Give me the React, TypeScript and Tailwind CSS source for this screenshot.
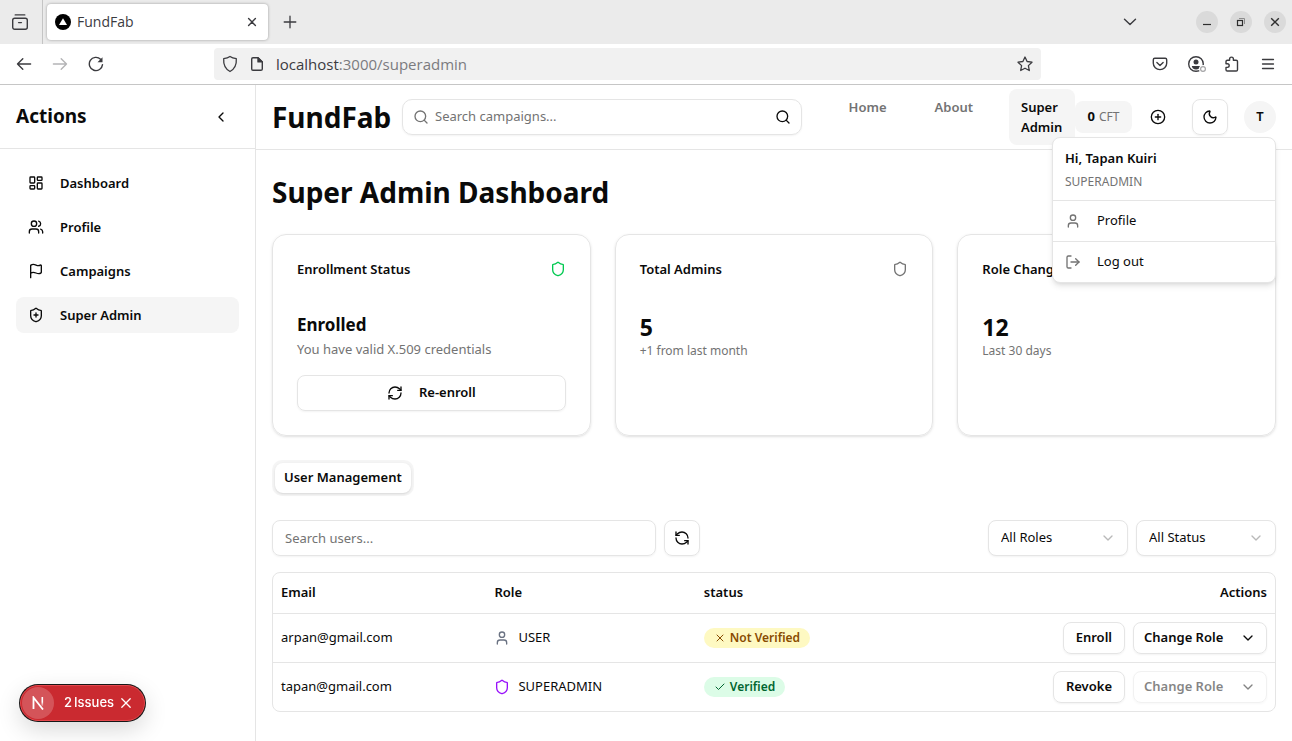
import type { ReactNode } from "react";
import {
  Check,
  ChevronDown,
  ChevronLeft,
  CirclePlus,
  Flag,
  LayoutDashboard,
  LogOut,
  Moon,
  RefreshCcw,
  RefreshCw,
  Search,
  Shield,
  ShieldPlus,
  User,
  Users,
  X,
} from "lucide-react";

function TabStrip() {
  return (
    <div className="flex h-11 items-center bg-[#ebebeb] text-[#3b3b3f]">
      <button aria-label="Recent browsing" className="flex h-11 w-[43px] shrink-0 items-center justify-center border-r border-[#c4c4c4] pr-0.5">
        <svg width="18" height="18" viewBox="0 0 18 18" fill="none" stroke="currentColor" strokeWidth="1.4" strokeLinecap="round">
          <path d="M4.2 1.900h9.600" />
          <rect x="1.700" y="5.300" width="14.600" height="11" rx="2" />
          <path d="M7.600 9.600h2.800" />
        </svg>
      </button>
      <div className="ml-1 flex h-9 w-[221px] items-center rounded bg-white pr-1.5 pl-2 shadow-[0_0_3px_rgba(0,0,0,0.35)]">
        <svg width="16" height="16" viewBox="0 0 16 16" className="shrink-0">
          <circle cx="8" cy="8" r="8" fill="#000" />
          <path d="M8 4.2l4 6.8H4z" fill="#fff" />
        </svg>
        <span className="ml-1.5 flex-1 text-sm">FundFab</span>
        <button aria-label="Close tab" className="flex size-5 items-center justify-center">
          <svg width="10" height="10" viewBox="0 0 10 10" stroke="currentColor" strokeWidth="1.4" strokeLinecap="round">
            <path d="M1.6 1.6l6.8 6.8M8.4 1.6L1.6 8.4" />
          </svg>
        </button>
      </div>
      <button aria-label="New tab" className="ml-3 flex size-5 items-center justify-center">
        <svg width="14" height="14" viewBox="0 0 14 14" stroke="currentColor" strokeWidth="1.3" strokeLinecap="round">
          <path d="M7 1.2v11.6M1.2 7h11.6" />
        </svg>
      </button>
      <div className="flex-1" />
      <button aria-label="List all tabs" className="mr-14 flex size-5 items-center justify-center">
        <svg width="14" height="14" viewBox="0 0 14 14" fill="none" stroke="currentColor" strokeWidth="1.4" strokeLinecap="round" strokeLinejoin="round">
          <path d="M1.5 4.2L7 9.6l5.500-5.400" />
        </svg>
      </button>
      <div className="mr-1.5 flex gap-3">
        <button aria-label="Minimize" className="flex size-[22px] items-center justify-center rounded-full bg-[#dadada]">
          <svg width="10" height="10" viewBox="0 0 10 10" stroke="#2e2e2e" strokeWidth="1.2">
            <path d="M1 7.500h8" />
          </svg>
        </button>
        <button aria-label="Restore" className="flex size-[22px] items-center justify-center rounded-full bg-[#dadada]">
          <svg width="10" height="10" viewBox="0 0 10 10" fill="none">
            <path d="M3 1.500h5.500V7" stroke="#8c8c8c" />
            <rect x="1.500" y="3.500" width="5" height="5" stroke="#2e2e2e" strokeWidth="1.2" />
          </svg>
        </button>
        <button aria-label="Close" className="flex size-[22px] items-center justify-center rounded-full bg-[#dadada]">
          <svg width="10" height="10" viewBox="0 0 10 10" stroke="#2e2e2e" strokeWidth="1.4">
            <path d="M1.200 1.200l7.600 7.600M8.800 1.200L1.200 8.800" />
          </svg>
        </button>
      </div>
    </div>
  );
}

function AddressBar() {
  return (
    <div className="flex h-[41px] items-center border-b border-[#c6c6c6] bg-white text-[#3b3b3f]">
      <div className="flex w-[214px] shrink-0 items-center gap-5 pl-4">
        <button aria-label="Back">
          <svg width="16" height="16" viewBox="0 0 16 16" fill="none" stroke="currentColor" strokeWidth="1.4" strokeLinecap="round" strokeLinejoin="round">
            <path d="M14.600 8H1.500M6.800 2.700L1.500 8l5.300 5.300" />
          </svg>
        </button>
        <button aria-label="Forward" disabled className="text-[#b4b4b6]">
          <svg width="16" height="16" viewBox="0 0 16 16" fill="none" stroke="currentColor" strokeWidth="1.400" strokeLinecap="round" strokeLinejoin="round">
            <path d="M1.400 8h13.100M9.200 2.700L14.500 8l-5.300 5.300" />
          </svg>
        </button>
        <button aria-label="Reload">
          <svg width="16" height="16" viewBox="0 0 16 16" fill="none" stroke="currentColor" strokeWidth="1.400" strokeLinecap="round">
            <path d="M14.500 8.600A6.600 6.600 0 1 1 12.600 3.300" />
            <path d="M14.500 1.200v5H9.500z" fill="currentColor" stroke="none" />
          </svg>
        </button>
      </div>
      <div className="flex h-8 flex-1 items-center rounded bg-[#f1f1f1] px-2">
        <svg width="16" height="18" viewBox="0 0 16 18" fill="none" stroke="currentColor" strokeWidth="1.300" strokeLinejoin="round">
          <path d="M8 1.500c1.700 1.200 3.600 1.800 6.300 2.100.4 5.400-1.300 10.200-6.300 12.900C3 13.800 1.300 9 1.700 3.600 4.400 3.300 6.300 2.700 8 1.500z" />
        </svg>
        <svg width="14" height="16" viewBox="0 0 14 16" fill="none" stroke="currentColor" strokeWidth="1.400" strokeLinejoin="round" className="ml-3">
          <path d="M3 1.700h5l4.300 4.200v7q0 1.400-1.400 1.400H3q-1.300 0-1.300-1.400V3Q1.700 1.700 3 1.700z" />
          <path d="M8 1.700v4.200h4.300z" fill="currentColor" />
        </svg>
        <div role="textbox" aria-label="Address" className="ml-3 flex-1 text-[15px] text-[#7b7b7f]">
          <span className="text-[#3b3b3f]">localhost</span>:3000/superadmin
        </div>
        <button aria-label="Bookmark this page">
          <svg width="16" height="16" viewBox="0 0 16 16" fill="none" stroke="currentColor" strokeWidth="1.300" strokeLinejoin="round">
            <path d="M8 1l2.100 4.500 4.900.7-3.600 3.400.9 4.900L8 12.200l-4.300 2.300.9-4.900L1 6.200l4.900-.7z" />
          </svg>
        </button>
      </div>
      <div className="flex w-[251px] shrink-0 items-center justify-end gap-5 pr-4">
        <button aria-label="Save to Pocket">
          <svg width="16" height="16" viewBox="0 0 16 16" fill="none" stroke="currentColor" strokeWidth="1.400" strokeLinecap="round" strokeLinejoin="round">
            <path d="M2.800 2.200h10.400q1.500 0 1.500 1.500v3.600a6.700 6.300 0 0 1-13.400 0V3.700q0-1.500 1.500-1.500z" />
            <path d="M4.900 6.600L8 9.500l3.100-2.900" />
          </svg>
        </button>
        <button aria-label="Account">
          <svg width="16" height="16" viewBox="0 0 16 16" fill="none" className="overflow-visible">
            <circle cx="8" cy="8" r="7.300" stroke="currentColor" strokeWidth="1.400" />
            <circle cx="8" cy="6" r="2.500" fill="currentColor" />
            <path d="M3.800 10h8.400c0 2-1.900 3.400-4.200 3.400S3.800 12 3.800 10z" fill="currentColor" />
            <circle cx="15" cy="13" r="4" fill="#fff" />
            <circle cx="15" cy="13" r="2.400" fill="#fff" stroke="#a4a4a6" strokeWidth="1.200" />
          </svg>
        </button>
        <button aria-label="Extensions">
          <svg width="16" height="16" viewBox="0 0 16 16" fill="none" stroke="currentColor" strokeWidth="1.400" strokeLinejoin="round">
            <path d="M2 5.500q0-1.300 1.300-1.300h2.300V3a1.900 1.900 0 0 1 3.800 0v1.200h2.800q1.300 0 1.300 1.300v8.200q0 1.300-1.300 1.300H3.300Q2 15 2 13.700v-2.300h1.400a1.800 1.800 0 0 0 0-3.600H2z" />
          </svg>
        </button>
        <button aria-label="Open application menu">
          <svg width="16" height="16" viewBox="0 0 16 16" stroke="currentColor" strokeWidth="1.300" strokeLinecap="round">
            <path d="M2.500 3.500h11M2.500 8h11M2.500 12.500h11" />
          </svg>
        </button>
      </div>
    </div>
  );
}

const sideItems = [
  { label: "Dashboard", icon: LayoutDashboard, active: false },
  { label: "Profile", icon: Users, active: false },
  { label: "Campaigns", icon: Flag, active: false },
  { label: "Super Admin", icon: ShieldPlus, active: true },
];

function Sidebar() {
  return (
    <aside className="w-64 shrink-0 border-r border-neutral-200">
      <div className="flex h-16 items-center justify-between border-b border-neutral-200 px-4">
        <h2 className="text-[19px] font-bold">Actions</h2>
        <button aria-label="Collapse sidebar" className="flex size-9 items-center justify-center">
          <ChevronLeft size={16} />
        </button>
      </div>
      <nav className="flex flex-col gap-2 p-4">
        {sideItems.map(({ label, icon: Icon, active }) => (
          <a
            key={label}
            href="#"
            className={`flex items-center gap-4 rounded-lg px-3 py-2 text-[13px] leading-5 font-semibold ${active ? "bg-neutral-100" : ""}`}
          >
            <Icon size={16} />
            {label}
          </a>
        ))}
      </nav>
    </aside>
  );
}

function AccountMenu() {
  return (
    <div className="absolute top-9 right-0 z-10 w-56 rounded-lg border border-neutral-200 bg-white shadow-md">
      <div className="flex flex-col gap-1 px-3 pt-2.5 pb-2">
        <p className="text-[13px] leading-5 font-semibold">Hi, Tapan Kuiri</p>
        <p className="text-xs leading-5 text-neutral-500">SUPERADMIN</p>
      </div>
      <a href="#" className="flex h-[41px] items-center gap-4 border-t border-neutral-200 px-3 text-[13px]">
        <User size={16} className="text-neutral-500" />
        Profile
      </a>
      <button className="flex h-[41px] w-full items-center gap-4 border-t border-neutral-200 px-3 text-[13px]">
        <LogOut size={16} className="text-neutral-500" />
        Log out
      </button>
    </div>
  );
}

function Header() {
  return (
    <header className="flex h-[65px] items-center border-b border-neutral-200 px-4">
      <a href="#" className="w-[130px] shrink-0 text-[28px] font-bold">FundFab</a>
      <form className="flex h-9 max-w-[400px] flex-1 items-center rounded-[10px] border border-neutral-200 px-2.5 shadow-xs">
        <Search size={16} className="text-neutral-500" />
        <input
          aria-label="Search campaigns"
          placeholder="Search campaigns..."
          className="min-w-0 flex-1 px-1.5 text-[13px] outline-none placeholder:text-neutral-500"
        />
        <button type="button" aria-label="Search">
          <Search size={16} />
        </button>
      </form>
      <nav className="ml-auto flex items-start gap-6 text-[13px] leading-5 font-semibold">
        <a href="#" className="px-3 py-2 text-neutral-500">Home</a>
        <a href="#" className="px-3 py-2 text-neutral-500">About</a>
        <a href="#" className="w-[66px] rounded-lg bg-neutral-100 px-3 py-2">Super Admin</a>
      </nav>
      <div className="flex h-8 w-[57px] items-center justify-center gap-1 rounded-lg bg-neutral-100 text-[13px] font-bold">
        0 <span className="text-xs font-normal text-neutral-500">CFT</span>
      </div>
      <button aria-label="Add funds" className="ml-2 flex size-9 items-center justify-center">
        <CirclePlus size={16} />
      </button>
      <button aria-label="Toggle theme" className="ml-4 flex size-9 items-center justify-center rounded-lg border border-neutral-200 shadow-xs">
        <Moon size={16} />
      </button>
      <div className="relative ml-4">
        <button aria-label="Account menu" className="flex size-8 items-center justify-center rounded-full bg-neutral-100 text-[13px] font-semibold">
          T
        </button>
        <AccountMenu />
      </div>
    </header>
  );
}

function Card({ title, icon, children }: { title: string; icon?: ReactNode; children: ReactNode }) {
  return (
    <section className="rounded-[14px] border border-neutral-200 p-6 shadow-sm">
      <div className="mb-8 flex h-5 items-center justify-between">
        <h3 className="text-[13px] leading-5 font-semibold">{title}</h3>
        {icon}
      </div>
      {children}
    </section>
  );
}

function Stat({ value, note }: { value: string; note: string }) {
  return (
    <>
      <p className="text-[23px] leading-8 font-bold">{value}</p>
      <p className="text-xs leading-4 text-neutral-500">{note}</p>
    </>
  );
}

function Filter({ label, option }: { label: string; option: string }) {
  return (
    <div className="relative w-[140px]">
      <select aria-label={label} className="h-9 w-full appearance-none rounded-lg border border-neutral-200 bg-white px-3 text-[13px] shadow-xs">
        <option>{option}</option>
      </select>
      <ChevronDown size={16} className="pointer-events-none absolute top-2.5 right-3 text-[#b9b9b9]" />
    </div>
  );
}

const users = [
  { email: "arpan@gmail.com", role: "USER", verified: false, action: "Enroll" },
  { email: "tapan@gmail.com", role: "SUPERADMIN", verified: true, action: "Revoke" },
];

function UserTable() {
  return (
    <div className="mt-4 rounded-lg border border-neutral-200">
      <table className="w-full table-fixed text-left text-[13px]">
        <thead>
          <tr className="h-10 border-b border-neutral-200">
            <th className="w-[21.3%] px-2 font-semibold">Email</th>
            <th className="w-[20.9%] px-2 font-semibold">Role</th>
            <th className="w-[25%] px-2 font-semibold">status</th>
            <th className="px-2 text-right font-semibold">Actions</th>
          </tr>
        </thead>
        <tbody>
          {users.map((user) => (
            <tr key={user.email} className="h-[49px] border-b border-neutral-200 last:border-b-0">
              <td className="px-2">{user.email}</td>
              <td className="px-2">
                <div className="flex items-center gap-2">
                  {user.verified ? (
                    <Shield size={16} className="text-[#9810fa]" />
                  ) : (
                    <User size={16} className="text-[#6a7282]" />
                  )}
                  {user.role}
                </div>
              </td>
              <td className="px-2">
                <span
                  className={`flex h-5 w-fit items-center gap-1 rounded-full px-2.5 text-xs font-semibold ${
                    user.verified ? "bg-[#dcfce7] text-[#016630]" : "bg-[#fef9c2] text-[#894b00]"
                  }`}
                >
                  {user.verified ? <Check size={12} /> : <X size={12} />}
                  {user.verified ? "Verified" : "Not Verified"}
                </span>
              </td>
              <td className="px-2">
                <div className="flex justify-end gap-2 font-semibold">
                  <button className="h-8 rounded-lg border border-neutral-200 px-3 shadow-xs">{user.action}</button>
                  <button
                    disabled={user.verified}
                    className="flex h-8 w-[134px] items-center justify-between rounded-lg border border-neutral-200 px-2.5 shadow-xs disabled:opacity-50"
                  >
                    Change Role
                    <ChevronDown size={16} />
                  </button>
                </div>
              </td>
            </tr>
          ))}
        </tbody>
      </table>
    </div>
  );
}

function IssuesBadge() {
  return (
    <div className="fixed bottom-5 left-5 flex h-9 items-center rounded-full border border-[#e5484d] bg-[#ca2a30] pr-3 pl-px text-white shadow-[0_0_0_1px_#171717,0_8px_24px_rgba(0,0,0,0.16)]">
      <span className="flex size-8 items-center justify-center rounded-full bg-white/20">
        <svg width="14" height="14" viewBox="0 0 14 14" fill="none">
          <defs>
            <linearGradient id="stem" x1="11" y1="1" x2="11" y2="11" gradientUnits="userSpaceOnUse">
              <stop offset="0.500" stopColor="#fff" />
              <stop offset="1" stopColor="#fff" stopOpacity="0" />
            </linearGradient>
          </defs>
          <path d="M2.500 13V1.500L12 13.500" stroke="#fff" strokeWidth="1.800" />
          <path d="M11.300 1v9" stroke="url(#stem)" strokeWidth="1.600" />
        </svg>
      </span>
      <button className="ml-2.5 flex gap-0.5 font-[Inter,sans-serif] text-[13px] font-medium">
        <span>2</span>
        <span>Issues</span>
      </button>
      <button aria-label="Dismiss issues" className="ml-1.5">
        <svg width="12" height="12" viewBox="0 0 12 12" stroke="#fff" strokeWidth="1.300" strokeLinecap="round">
          <path d="M1.800 1.800l8.400 8.400M10.200 1.800l-8.400 8.400" />
        </svg>
      </button>
    </div>
  );
}

export default function App() {
  return (
    <div className="flex min-h-screen flex-col bg-white font-['Noto_Sans',sans-serif] text-neutral-950">
      <div className="font-['Open_Sans',sans-serif]">
        <TabStrip />
        <AddressBar />
      </div>
      <div className="flex flex-1">
        <Sidebar />
        <div className="min-w-0 flex-1">
          <Header />
          <main className="px-4 py-6">
            <h1 className="text-[28px] leading-9 font-bold">Super Admin Dashboard</h1>
            <div className="mt-6 grid grid-cols-3 gap-6">
              <Card title="Enrollment Status" icon={<Shield size={16} className="text-[#00c950]" />}>
                <p className="text-[17px] leading-7 font-bold">Enrolled</p>
                <p className="text-[13px] leading-5 text-neutral-500">You have valid X.509 credentials</p>
                <button className="mt-4 flex h-9 w-full items-center justify-center gap-4 rounded-lg border border-neutral-200 text-[13px] font-semibold shadow-xs">
                  <RefreshCw size={16} />
                  Re-enroll
                </button>
              </Card>
              <Card title="Total Admins" icon={<Shield size={16} className="text-neutral-500" />}>
                <Stat value="5" note="+1 from last month" />
              </Card>
              <Card title="Role Changes">
                <Stat value="12" note="Last 30 days" />
              </Card>
            </div>
            <div className="mt-6 flex h-9 w-fit rounded-[10px] bg-neutral-100 p-[3px]" role="tablist">
              <button role="tab" aria-selected="true" className="rounded-lg bg-white px-[9px] text-[13px] font-semibold shadow-sm">
                User Management
              </button>
            </div>
            <div className="mt-6 flex gap-2">
              <input
                aria-label="Search users"
                placeholder="Search users..."
                className="h-9 w-96 rounded-lg border border-neutral-200 px-3 text-[13px] shadow-xs placeholder:text-neutral-500"
              />
              <button aria-label="Refresh users" className="mr-auto flex size-9 items-center justify-center rounded-lg border border-neutral-200 shadow-xs">
                <RefreshCcw size={16} />
              </button>
              <Filter label="Role filter" option="All Roles" />
              <Filter label="Status filter" option="All Status" />
            </div>
            <UserTable />
          </main>
        </div>
      </div>
      <IssuesBadge />
    </div>
  );
}
